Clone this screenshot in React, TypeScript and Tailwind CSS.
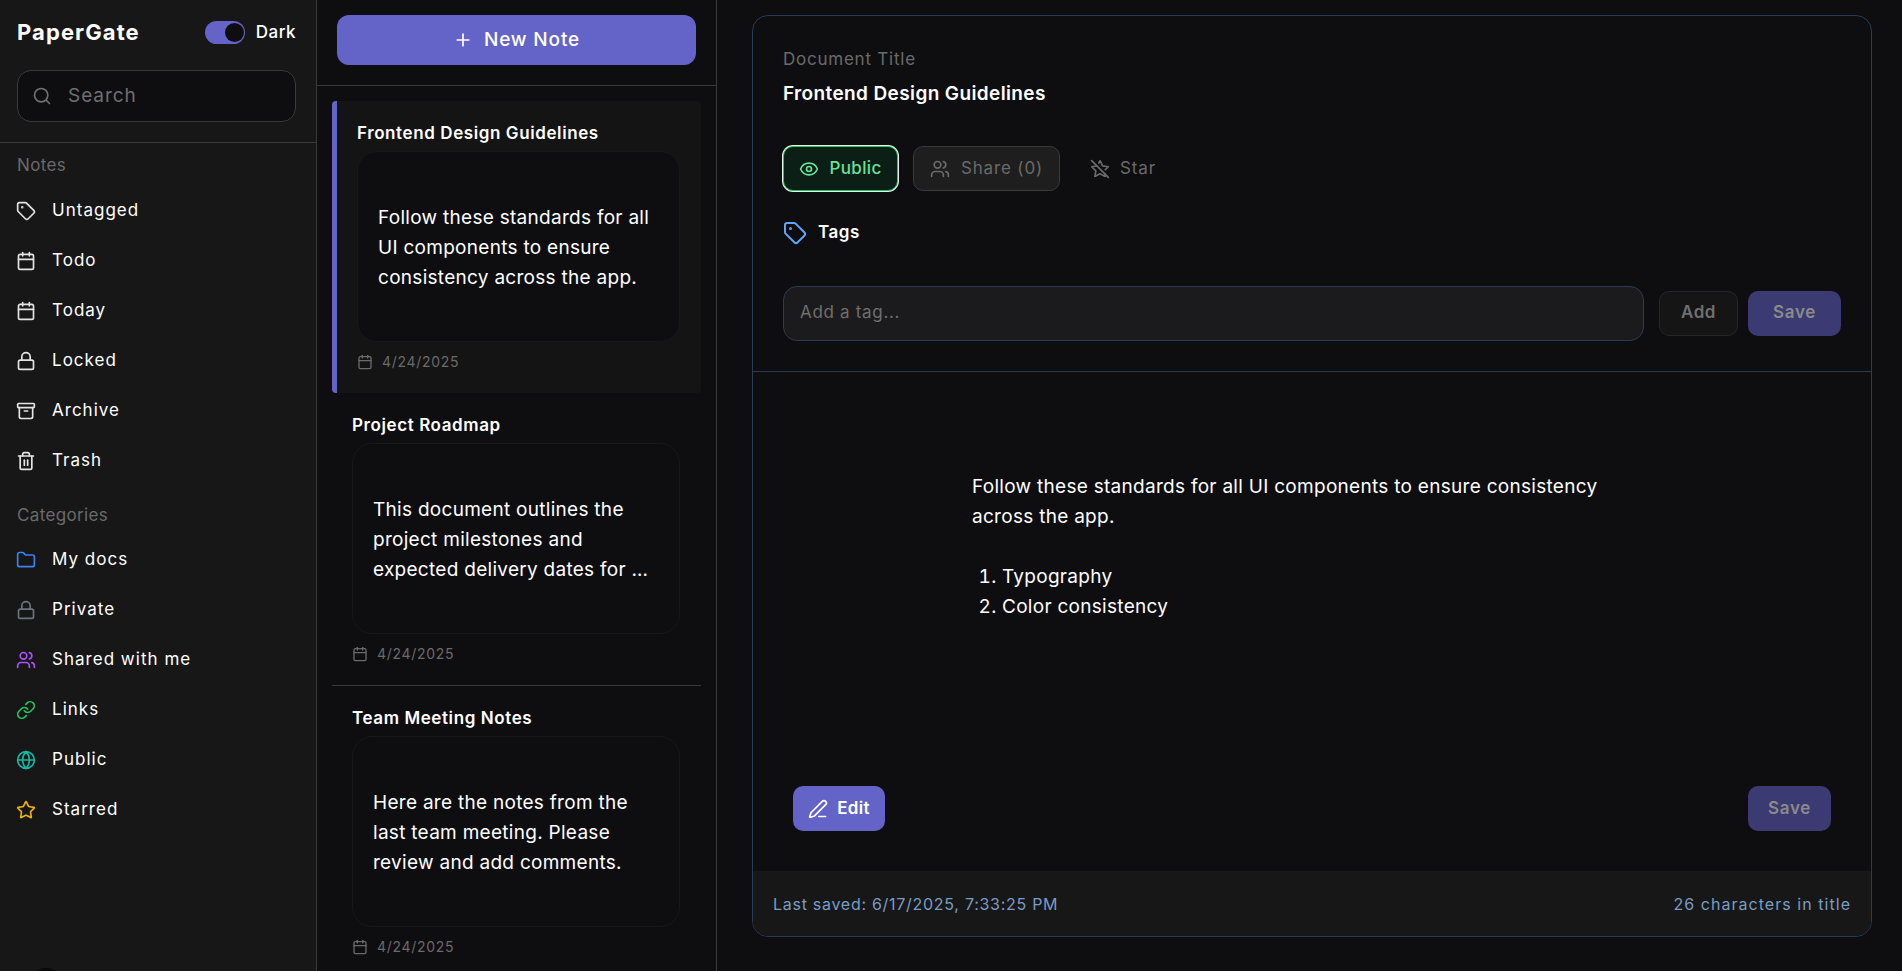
import { Archive, Calendar, Eye, Folder, Globe, Link, Lock, PenLine, Plus, Search, Star, StarOff, Tag, Trash2, Users } from "lucide-react";

const noteLinks = [
  { label: "Untagged", icon: Tag },
  { label: "Todo", icon: Calendar },
  { label: "Today", icon: Calendar },
  { label: "Locked", icon: Lock },
  { label: "Archive", icon: Archive },
  { label: "Trash", icon: Trash2 },
];

const categoryLinks = [
  { label: "My docs", icon: Folder, color: "text-[#3b82f6]" },
  { label: "Private", icon: Lock, color: "text-[#6b7280]" },
  { label: "Shared with me", icon: Users, color: "text-[#a855f7]" },
  { label: "Links", icon: Link, color: "text-[#22c55e]" },
  { label: "Public", icon: Globe, color: "text-[#14b8a6]" },
  { label: "Starred", icon: Star, color: "text-[#eab308]" },
];

const notes = [
  {
    title: "Frontend Design Guidelines",
    body: "Follow these standards for all UI components to ensure consistency across the app.",
    active: true,
  },
  {
    title: "Project Roadmap",
    body: "This document outlines the project milestones and expected delivery dates for …",
    active: false,
  },
  {
    title: "Team Meeting Notes",
    body: "Here are the notes from the last team meeting. Please review and add comments.",
    active: false,
  },
];

function Sidebar() {
  return (
    <aside className="relative flex h-full w-[317px] shrink-0 flex-col border-r border-[#3a3a3a] bg-[#171717]">
      <div className="border-b border-[#3a3a3a] pt-[21px] pr-[20px] pb-[20px] pl-[17px]">
        <div className="flex h-[23px] items-center justify-between">
          <span className="text-[22px] font-bold tracking-[0.05em] text-white">PaperGate</span>
          <div className="flex items-center gap-[11px]">
            <div className="flex h-[23px] w-[40px] items-center justify-end rounded-full bg-[#6464c8] pr-[1px]">
              <div className="h-[19px] w-[19px] rounded-full bg-[#0e0e11]" />
            </div>
            <span className="text-[17px] font-medium tracking-[0.03em] text-white">Dark</span>
          </div>
        </div>
        <div className="mt-[26px] flex h-[52px] items-center gap-[16px] rounded-[14px] border border-[#3a3a3a] bg-[#0e0e11] px-[14px]">
          <Search size={20} className="text-[#6f6f6f]" />
          <span className="text-[19px] tracking-[0.05em] text-[#6f6f6f]">Search</span>
        </div>
      </div>

      <div className="px-[17px] pt-[10px]">
        <div className="text-[17px] tracking-[0.02em] text-[#6a6a6a]">Notes</div>
        <nav className="mt-[7px] -ml-[1px] flex flex-col">
          {noteLinks.map(({ label, icon: Icon }) => (
            <div key={label} className="flex h-[50px] items-center gap-[16px]">
              <Icon size={20} className="text-[#e4e4e4]" />
              <span className="text-[17px] tracking-[0.06em] text-white">{label}</span>
            </div>
          ))}
        </nav>
        <div className="mt-[17px] text-[17px] tracking-[0.02em] text-[#6a6a6a]">Categories</div>
        <nav className="mt-[7px] -ml-[1px] flex flex-col">
          {categoryLinks.map(({ label, icon: Icon, color }) => (
            <div key={label} className="flex h-[50px] items-center gap-[16px]">
              <Icon size={20} className={color} />
              <span className="text-[17px] tracking-[0.06em] text-white">{label}</span>
            </div>
          ))}
        </nav>
      </div>

      {/* avatar peeking in at the bottom edge */}
      <div className="absolute bottom-[-34px] left-[28px] h-[37px] w-[37px] rounded-full bg-[#0a0a0a]" />
    </aside>
  );
}

function NoteList() {
  return (
    <section className="flex h-full w-[400px] shrink-0 flex-col overflow-hidden border-r border-[#3a3a3a] bg-[#0e0e11]">
      <div className="border-b border-[#3a3a3a] px-5 pt-[15px] pb-[20px]">
        <button className="flex h-[50px] w-full items-center justify-center gap-[11px] rounded-[12px] bg-[#6464c8] text-white">
          <Plus size={20} />
          <span className="text-[19px] font-medium tracking-[0.045em]">New Note</span>
        </button>
      </div>
      <div className="flex flex-col pt-[15px] pr-[15px] pl-[15px]">
        {notes.map((note, i) => (
          <article
            key={note.title}
            className={
              note.active
                ? "h-[292px] shrink-0 rounded-[4px] border-l-[5px] border-[#6464c8] bg-[#141414] pt-[19px] pr-[21px] pl-[20px]"
                : i === 1
                  ? "h-[293px] shrink-0 border-b border-[#3a3a3a] pt-[19px] pr-[21px] pl-[20px]"
                  : "h-[293px] shrink-0 pt-[19px] pr-[21px] pl-[20px]"
            }
          >
            <h3 className="pt-[2px] text-[17px] leading-[23px] font-semibold tracking-[0.035em] text-white">{note.title}</h3>
            <div className="mt-[6px] flex h-[191px] items-center rounded-[20px] border border-[#18181b] bg-[#0e0e11] px-[20px] pt-[3px]">
              <p className="text-[19px] leading-[30px] tracking-[0.015em] text-white">{note.body}</p>
            </div>
            <div className="mt-[9px] flex items-center gap-[9px] text-[#6a6a6a]">
              <Calendar size={16} />
              <span className="text-[14px] tracking-[0.05em]">4/24/2025</span>
            </div>
          </article>
        ))}
      </div>
    </section>
  );
}

function Editor() {
  return (
    <main className="flex h-full min-w-0 flex-1 bg-[#0e0e11] pt-[15px] pr-[30px] pb-[34px] pl-[35px]">
      <div className="flex min-w-0 flex-1 flex-col overflow-hidden rounded-[16px] border border-[#2b3a55] bg-[#0e0e11]">
        <div className="h-[356px] shrink-0 border-b border-[#2b3a55] px-[30px] pt-[33px]">
          <div className="text-[17px] leading-[20px] tracking-[0.045em] text-[#6a6a6a]">Document Title</div>
          <div className="mt-[12px] text-[19px] leading-[26px] font-semibold tracking-[0.02em] text-white">Frontend Design Guidelines</div>

          <div className="mt-[39px] flex items-center gap-[15px]">
            <button className="flex h-[45px] w-[115px] items-center justify-center gap-[10px] rounded-[10px] border border-[#22c55e] bg-[#0c1f16] text-[#68e29a] ring-1 ring-[#e8f5ec]">
              <Eye size={20} />
              <span className="text-[17px] font-medium tracking-[0.02em]">Public</span>
            </button>
            <button className="flex h-[45px] w-[147px] items-center justify-center gap-[11px] rounded-[10px] border border-[#3a3a3a] bg-[#1e1e1f] text-[#6a6a6a]">
              <Users size={20} />
              <span className="text-[17px] tracking-[0.05em]">Share (0)</span>
            </button>
            <button className="ml-[15px] flex h-[45px] items-center gap-[10px] text-[#6a6a6a]">
              <StarOff size={20} />
              <span className="text-[17px] tracking-[0.05em]">Star</span>
            </button>
          </div>

          <div className="mt-[29px] flex items-center gap-[11px]">
            <Tag size={24} className="text-[#60a5fa]" />
            <span className="text-[17px] font-semibold tracking-[0.03em] text-white">Tags</span>
          </div>

          <div className="mt-[40px] flex items-center">
            <div className="flex h-[55px] min-w-0 flex-1 items-center rounded-[14px] border border-[#2b3a55] bg-[#1b1b1d] px-4">
              <span className="text-[17px] tracking-[0.04em] text-[#6f6f6f]">Add a tag...</span>
            </div>
            <button className="ml-[15px] flex h-[45px] w-[79px] items-center justify-center rounded-[10px] border border-[#262626] bg-[#151516] text-[17px] font-semibold tracking-[0.03em] text-[#6f6f6f]">
              Add
            </button>
            <button className="ml-[10px] flex h-[45px] w-[93px] items-center justify-center rounded-[10px] bg-[#3b3a72] text-[17px] font-semibold tracking-[0.04em] text-[#8a8a8a]">
              Save
            </button>
          </div>
        </div>

        <div className="flex min-h-0 flex-1 flex-col justify-between px-[40px] pb-[40px]">
          <div className="pt-[100px] pl-[179px]">
            <p className="w-[650px] text-[19px] leading-[30px] tracking-[0.015em] text-white">
              Follow these standards for all UI components to ensure consistency across the app.
            </p>
            <ol className="mt-[30px] list-decimal pl-[30px] text-[19px] leading-[30px] tracking-[0.015em] text-white">
              <li>Typography</li>
              <li>Color consistency</li>
            </ol>
          </div>
          <div className="flex items-center justify-between">
            <button className="flex h-[45px] w-[92px] items-center justify-center gap-[9px] rounded-[10px] bg-[#6464c8] text-white">
              <PenLine size={20} />
              <span className="text-[17px] font-semibold tracking-[0.02em]">Edit</span>
            </button>
            <button className="flex h-[45px] w-[83px] items-center justify-center rounded-[10px] bg-[#3b3a72] text-[17px] font-semibold tracking-[0.04em] text-[#8a8a8a]">
              Save
            </button>
          </div>
        </div>

        <div className="flex h-[65px] shrink-0 items-center justify-between bg-[#171717] px-[20px] text-[16px] text-[#7a9cc6]">
          <span className="tracking-[0.045em]">Last saved: 6/17/2025, 7:33:25 PM</span>
          <span className="tracking-[0.065em]">26 characters in title</span>
        </div>
      </div>
    </main>
  );
}

export default function App() {
  return (
    <div className="flex h-[971px] w-full overflow-hidden bg-[#0e0e11] font-['Inter',sans-serif]">
      <Sidebar />
      <NoteList />
      <Editor />
    </div>
  );
}
